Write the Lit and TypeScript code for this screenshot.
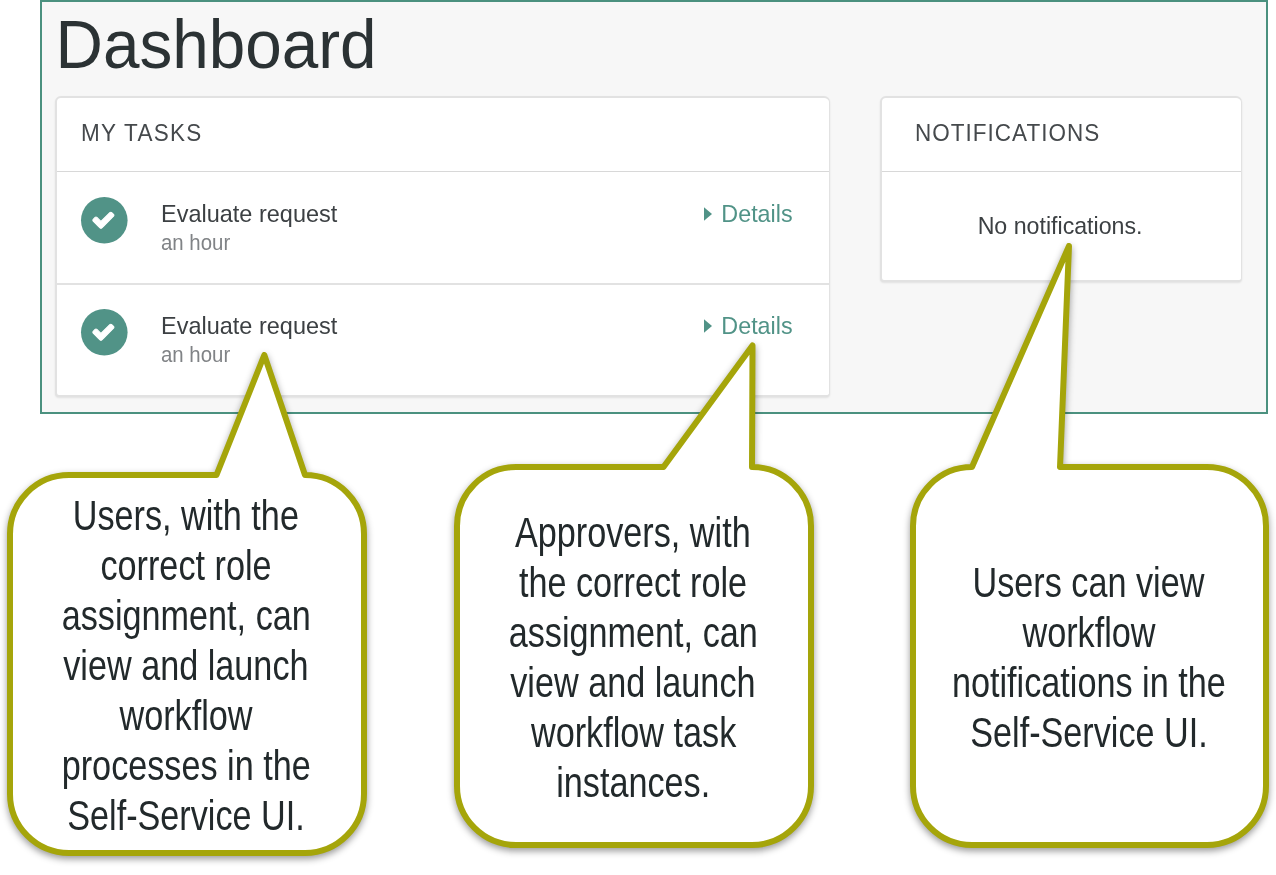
import { LitElement, html, css } from "lit";
import { customElement, property } from "lit/decorators.js";

@customElement("call-out")
class CallOut extends LitElement {
  @property({ attribute: false }) lines: string[] = [];
  @property() path = "";
  static styles = css`
    :host {
      display: flex;
      position: relative;
      box-sizing: border-box;
      width: 360px;
      height: 384px;
      padding: 2px 1.5px 0 0;
      flex-direction: column;
      align-items: center;
      justify-content: center;
    }
    .bubble {
      position: absolute;
      inset: 0;
      width: 100%;
      height: 100%;
      overflow: visible;
      filter: drop-shadow(0 3px 3.5px rgba(0, 0, 0, 0.4));
    }
    .line {
      position: relative;
      display: block;
      white-space: nowrap;
      font: 43.2px/50px "Liberation Sans", Arial, sans-serif;
      color: #22292b;
      transform: scaleX(0.792);
    }
  `;
  render() {
    return html`
      <svg class="bubble">
        <path d=${this.path} fill="#fff" stroke="#a5a50a" stroke-width="6" stroke-linejoin="round" />
      </svg>
      ${this.lines.map((l) => html`<span class="line">${l}</span>`)}
    `;
  }
}

@customElement("task-row")
class TaskRow extends LitElement {
  static styles = css`
    :host {
      display: flex;
      align-items: flex-start;
      box-sizing: border-box;
      font: 24.4px/28px "Liberation Sans", Arial, sans-serif;
      color: #3c4043;
    }
    .badge {
      width: 46.6px;
      height: 46.6px;
      margin: 0 32.9px 0 24.3px;
      flex: none;
      overflow: visible;
    }
    .text {
      flex: 1;
      padding-top: 3px;
      transform: scaleX(0.963);
      transform-origin: left;
    }
    .when {
      font-size: 21.2px;
      line-height: 24px;
      margin-top: 3px;
      color: #808386;
    }
    .link {
      display: flex;
      align-items: center;
      padding-top: 3px;
      margin-right: 36.5px;
      color: #519387;
    }
    .label {
      transform: scaleX(0.955);
      transform-origin: right;
    }
    .caret {
      width: 8px;
      height: 14px;
      margin-right: 5.5px;
    }
  `;
  render() {
    return html`
      <svg class="badge" viewBox="0 0 46.6 46.6">
        <circle cx="23.3" cy="23.3" r="23.3" fill="#519387" />
        <path
          transform="translate(10.2 10.6) scale(0.0136)"
          fill="#fff"
          stroke="#fff"
          stroke-width="75"
          d="M1671 566q0 40-28 68l-724 724-136 136q-28 28-68 28t-68-28l-136-136-362-362q-28-28-28-68t28-68l136-136q28-28 68-28t68 28l294 295 656-657q28-28 68-28t68 28l136 136q28 28 28 68z"
        />
      </svg>
      <div class="text">
        <div>Evaluate request</div>
        <div class="when">an hour</div>
      </div>
      <div class="link">
        <svg class="caret" viewBox="0 0 8 14"><path d="M0 .3 8 7 0 13.7z" fill="#519387" /></svg>
        <span class="label">Details</span>
      </div>
    `;
  }
}

@customElement("app-root")
class AppRoot extends LitElement {
  static styles = css`
    :host {
      display: block;
      width: 1276px;
      height: 875px;
      overflow: hidden;
      background: #fff;
      font: 24.4px/28px "Liberation Sans", Arial, sans-serif;
      color: #3c4043;
    }
    .frame {
      box-sizing: border-box;
      width: 1228px;
      height: 414px;
      margin-left: 40px;
      padding: 10px 0 0 13px;
      border: 2px solid #4b917f;
      background: #f7f7f7;
    }
    .title {
      margin: 0 0 18px -1px;
      font-size: 69px;
      line-height: 66px;
      font-weight: 400;
      color: #2b3234;
      transform: translateX(1.5px) scaleX(0.951);
      transform-origin: left;
    }
    .cards {
      display: flex;
      align-items: flex-start;
      gap: 50px;
    }
    .card {
      box-sizing: border-box;
      border: 2px solid #e2e2e2;
      border-right-width: 1.5px;
      border-radius: 6px 6px 4px 4px;
      background: #fff;
      box-shadow: 0 1px 2px rgba(0, 0, 0, 0.09);
    }
    .tasks {
      width: 775px;
      height: 301px;
    }
    .notes {
      width: 362px;
      height: 186px;
    }
    .head {
      box-sizing: border-box;
      height: 74px;
      padding: 21px 0 0 24.3px;
      border-bottom: 1px solid #d8d8d8;
      font-size: 24.4px;
      letter-spacing: 1.4px;
      color: #45494c;
    }
    .notes .head {
      padding-left: 32.7px;
      letter-spacing: 1.1px;
    }
    .head-text {
      display: inline-block;
      transform: scaleX(0.922);
      transform-origin: left;
    }
    .first {
      height: 113px;
      padding-top: 25px;
      border-bottom: 2px solid #e2e2e2;
    }
    .second {
      padding-top: 24.3px;
    }
    .empty {
      padding-top: 40px;
      padding-right: 3px;
      text-align: center;
      transform: scaleX(0.95);
    }
    .callouts {
      display: flex;
      margin: 50px 0 0 7px;
    }
    .one {
      margin: 8px 87px 0 0;
    }
    .two {
      margin-right: 96px;
    }
    .three {
      width: 359px;
    }
  `;
  render() {
    return html`
      <div class="frame">
        <h1 class="title">Dashboard</h1>
        <div class="cards">
          <section class="card tasks">
            <div class="head"><span class="head-text">MY TASKS</span></div>
            <task-row class="first"></task-row>
            <task-row class="second"></task-row>
          </section>
          <section class="card notes">
            <div class="head"><span class="head-text">NOTIFICATIONS</span></div>
            <div class="empty">No notifications.</div>
          </section>
        </div>
      </div>
      <div class="callouts">
        <call-out
          class="one"
          path="M3 62A59 59 0 0 1 62 3H209.5L257.3-117 298 3A59 59 0 0 1 357 62V322A59 59 0 0 1 298 381H62A59 59 0 0 1 3 322Z"
          .lines=${["Users, with the", "correct role", "assignment, can", "view and launch", "workflow", "processes in the", "Self-Service UI."]}
        ></call-out>
        <call-out
          class="two"
          path="M3 62A59 59 0 0 1 62 3H209.5L298.5-118.5 298 3A59 59 0 0 1 357 62V322A59 59 0 0 1 298 381H62A59 59 0 0 1 3 322Z"
          .lines=${["Approvers, with", "the correct role", "assignment, can", "view and launch", "workflow task", "instances."]}
        ></call-out>
        <call-out
          class="three"
          path="M3 62A59 59 0 0 1 62 3L159-218 150 3H297A59 59 0 0 1 356 62V322A59 59 0 0 1 297 381H62A59 59 0 0 1 3 322Z"
          .lines=${["Users can view", "workflow", "notifications in the", "Self-Service UI."]}
        ></call-out>
      </div>
    `;
  }
}
